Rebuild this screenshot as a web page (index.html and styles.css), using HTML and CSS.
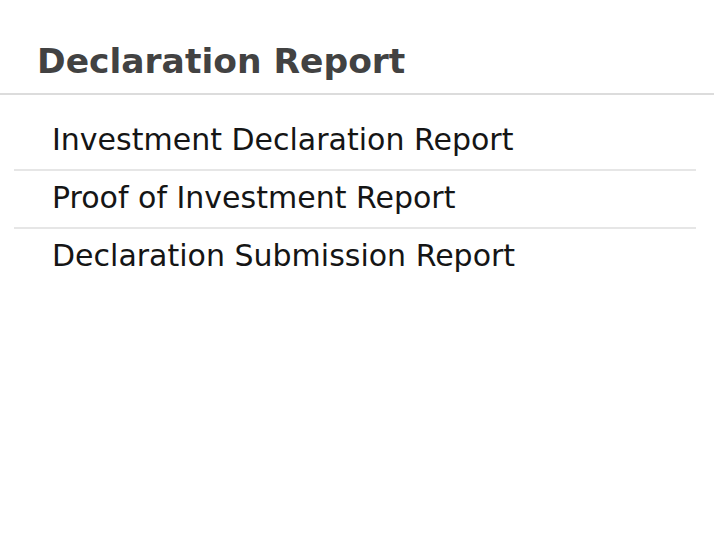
FILE: index.html
```html
<!DOCTYPE html>
<html>
<head>
<meta charset="utf-8">
<link rel="stylesheet" href="styles.css">
</head>
<body>
<div class="page">
  <header class="page-header">
    <h1 class="title">Declaration Report</h1>
  </header>
  <ul class="report-list">
    <li class="report-item">Investment Declaration Report</li>
    <li class="report-item">Proof of Investment Report</li>
    <li class="report-item">Declaration Submission Report</li>
  </ul>
</div>
</body>
</html>
```

FILE: styles.css
```css
html, body {
  margin: 0;
  padding: 0;
  background: #fff;
}
.page {
  width: 714px;
  font-family: "DejaVu Sans", "Liberation Sans", sans-serif;
}
.page-header {
  border-bottom: 2px solid #dcdcdc;
  padding: 39px 0 0 37px;
  height: 54px;
  box-sizing: content-box;
}
.title {
  margin: 0;
  font-size: 34.5px;
  line-height: 44px;
  font-weight: 600;
  color: #424242;
}
.report-list {
  list-style: none;
  margin: 18px 18px 0 14px;
  padding: 0;
}
.report-item {
  height: 56px;
  line-height: 54px;
  padding-left: 38px;
  font-size: 30px;
  color: #151515;
  border-bottom: 2px solid #e6e6e6;
}
.report-item:last-child {
  border-bottom: none;
}
```
